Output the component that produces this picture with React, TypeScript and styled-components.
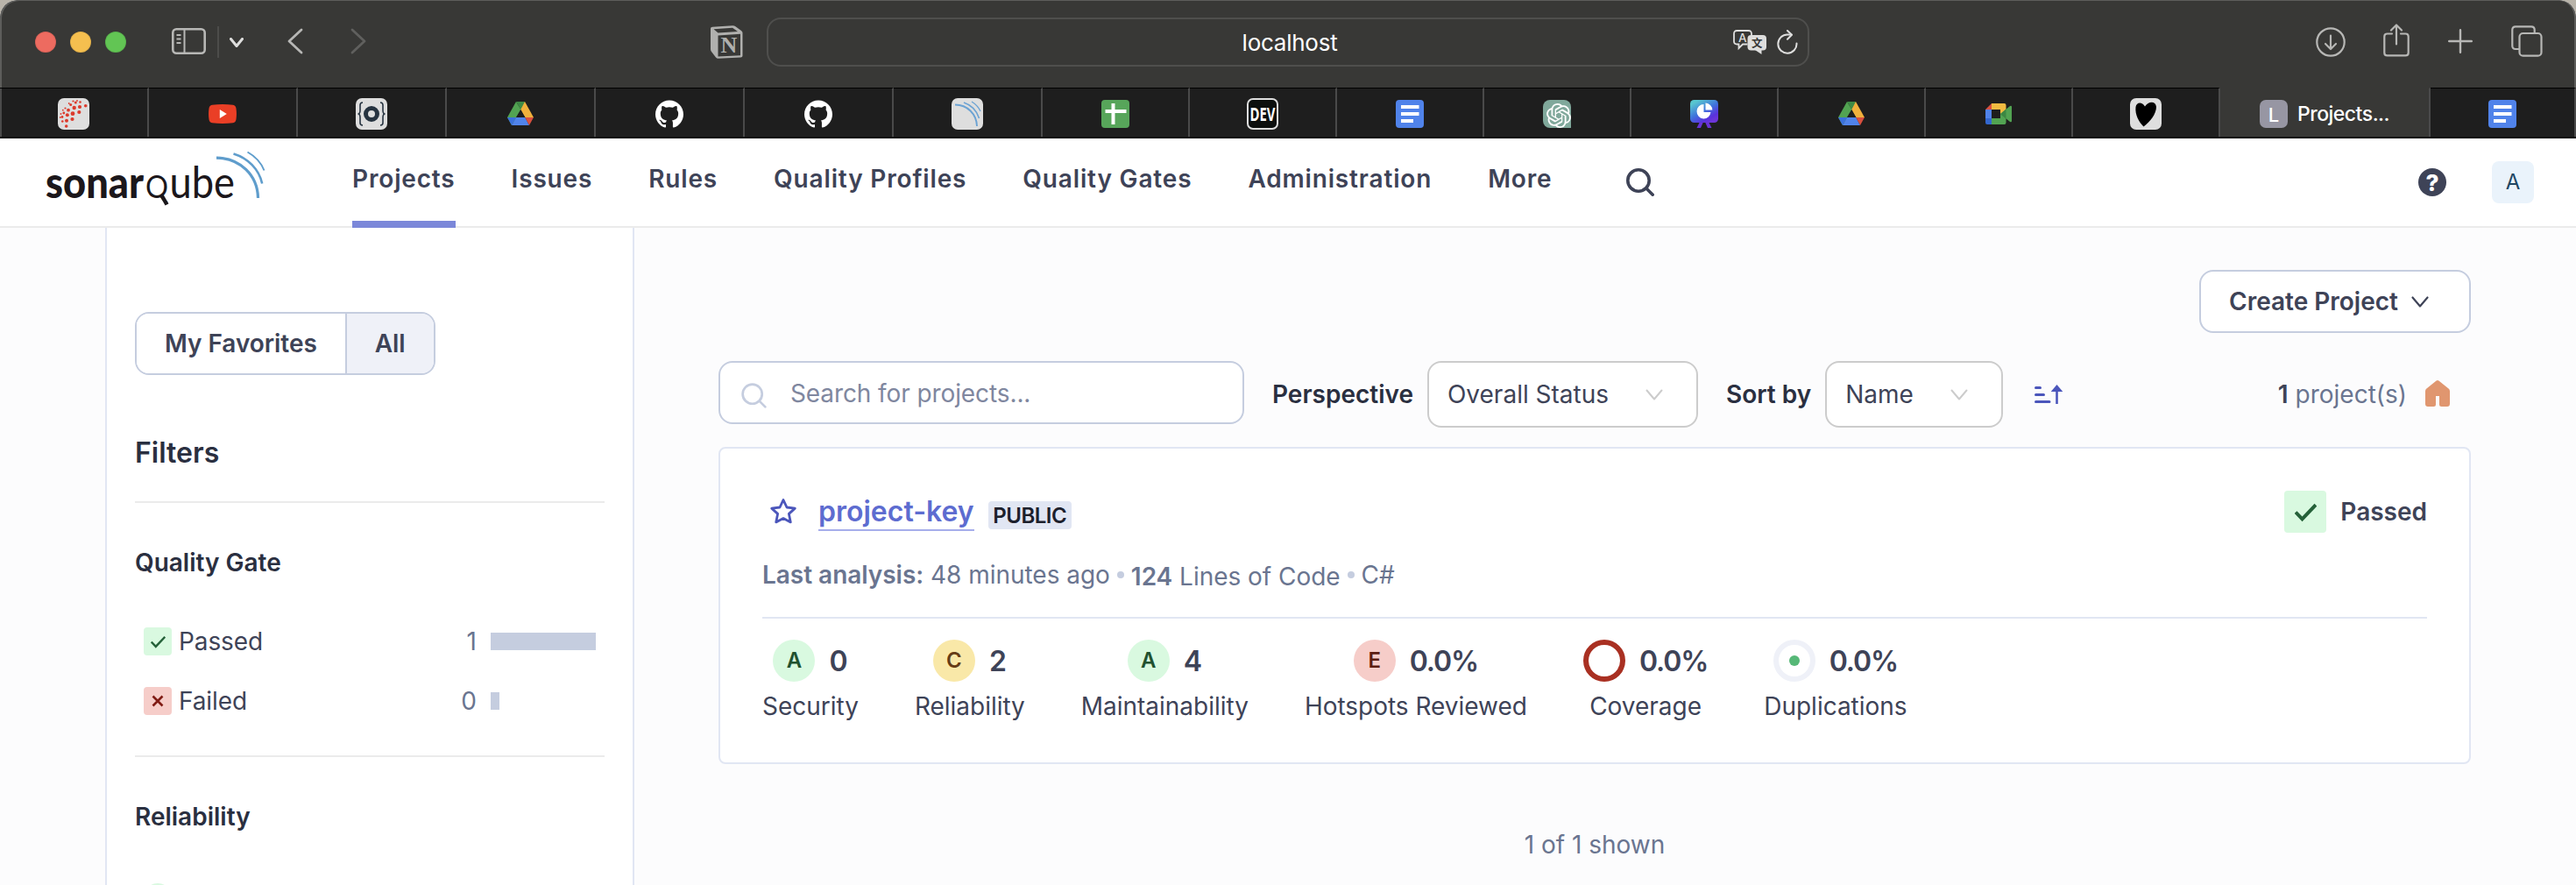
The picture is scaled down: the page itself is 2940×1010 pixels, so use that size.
import React from 'react';
import styled, { createGlobalStyle } from 'styled-components';
import { SiGithub, SiOpenai } from 'react-icons/si';

const color = {
  ink: '#3e4357',
  title: '#2a2f40',
  muted: '#6a7590',
  line: '#e1e6f3',
  field: '#c5cddf',
  rule: '#ebebeb',
};

const GlobalStyle = createGlobalStyle`
  * { box-sizing: border-box; }
  body {
    margin: 0;
    background: #b9b4aa;
    font-family: Inter, "Liberation Sans", sans-serif;
    font-size: 28px;
    line-height: 40px;
    font-optical-sizing: none;
    font-variation-settings: "opsz" 14;
    color: ${color.ink};
    -webkit-font-smoothing: antialiased;
  }
  svg { display: block; flex: none; }
`;

const Window = styled.div`
  width: 2940px;
  height: 1010px;
  overflow: hidden;
  border-radius: 20px 20px 0 0;
  background: #fcfcfd;
  display: flex;
  flex-direction: column;
`;

/* ---------- browser chrome ---------- */

const Toolbar = styled.div`
  height: 100px;
  flex: none;
  background: #383836;
  border-radius: 20px 20px 0 0;
  box-shadow: inset 2px 1px 0 #5d5d5b, inset -2px 0 0 #5d5d5b;
  display: flex;
  align-items: center;
  padding: 0 38px 4px 40px;
  color: #b7b7b5;
`;
const Lights = styled.div`
  display: flex;
  gap: 16px;
  margin-right: 52px;
`;
const Light = styled.span<{ $c: string }>`
  width: 24px;
  height: 24px;
  border-radius: 50%;
  background: ${(p) => p.$c};
  box-shadow: inset 0 0 0 1px rgba(0, 0, 0, 0.08);
`;
const Slot = styled.span<{ $w: number; $after?: number; $up?: number }>`
  width: ${(p) => p.$w}px;
  margin-right: ${(p) => p.$after ?? 0}px;
  padding-bottom: ${(p) => p.$up ?? 0}px;
  display: flex;
  flex: none;
`;
const ToolDivider = styled.span`
  width: 2px;
  height: 36px;
  background: #4c4c4a;
  margin-right: 12px;
`;
const UrlBar = styled.div`
  width: 1190px;
  height: 56px;
  border: 2px solid #4f4f4d;
  border-radius: 16px;
  display: flex;
  align-items: center;
  padding-right: 11px;
  color: #dededd;
`;
const UrlText = styled.span`
  flex: 1;
  text-align: center;
  padding-left: 89px;
  padding-top: 2px;
  color: #fff;
  font-size: 26px;
  letter-spacing: -0.25px;
`;
const Spacer = styled.span`
  flex: 1;
`;

const TabStrip = styled.div`
  height: 58px;
  flex: none;
  display: flex;
  background: #1e1e1e;
  border-bottom: 2px solid #050505;
  box-shadow: inset 2px 0 0 #4a4a4a;
`;
const Tab = styled.div<{ $w: number; $active?: boolean }>`
  width: ${(p) => p.$w}px;
  border-right: 2px solid #4a4a4a;
  border-top: 1px solid ${(p) => (p.$active ? '#383836' : '#000')};
  background: ${(p) => (p.$active ? '#383836' : 'transparent')};
  display: flex;
  align-items: center;
  justify-content: center;
  gap: 11px;
  padding-top: 2px;
  color: #fff;
`;
const Plate = styled.span`
  width: 36px;
  height: 36px;
  border-radius: 7px;
  background: #dedede;
  overflow: hidden;
  display: flex;
  align-items: center;
  justify-content: center;
`;
const DevPlate = styled(Plate)`
  background: #0c0f0e;
  border: 2px solid #dedede;
  overflow: visible;
`;
const LetterPlate = styled.span`
  width: 32px;
  height: 32px;
  border-radius: 7px;
  background: #9796a3;
  font-size: 22px;
  line-height: 34px;
  font-weight: 500;
  text-align: center;
`;
const TabTitle = styled.span`
  font-size: 23px;
  font-weight: 500;
  letter-spacing: -0.5px;
`;

/* ---------- application header ---------- */

const Header = styled.header`
  height: 102px;
  flex: none;
  background: #fff;
  border-bottom: 2px solid ${color.rule};
  display: flex;
  align-items: flex-start;
  padding: 0 48px 0 52px;
`;
const LogoBox = styled.div`
  width: 350px;
  padding-top: 14px;
`;
const Nav = styled.nav`
  display: flex;
  gap: 64px;
`;
const NavItem = styled.a<{ $active?: boolean }>`
  height: 102px;
  padding-top: 26px;
  font-weight: 600;
  letter-spacing: 0.84px;
  border-bottom: 8px solid ${(p) => (p.$active ? '#7b87d9' : 'transparent')};
`;
const HeaderIcon = styled.span`
  margin-left: 85px;
  padding-top: 34px;
`;
const Help = styled.span`
  width: 32px;
  height: 32px;
  margin: 34px 52px 0 0;
  border-radius: 50%;
  background: ${color.ink};
  color: #fff;
  font-size: 26px;
  font-weight: 800;
  line-height: 33px;
  text-align: center;
`;
const Avatar = styled.span`
  width: 48px;
  height: 48px;
  margin-top: 26px;
  border-radius: 8px;
  background: #eaf3fb;
  color: #1f4663;
  font-size: 24px;
  line-height: 48px;
  text-align: center;
`;

/* ---------- sidebar ---------- */

const Body = styled.div`
  flex: 1;
  min-height: 0;
  display: flex;
  padding-left: 120px;
`;
const Sidebar = styled.aside`
  width: 604px;
  background: #fff;
  border: 2px solid ${color.line};
  border-width: 0 2px;
  padding: 96px 32px 0;
  overflow: hidden;
`;
const Toggle = styled.div`
  display: inline-flex;
  height: 72px;
  border: 2px solid ${color.field};
  border-radius: 16px;
  overflow: hidden;
  vertical-align: top;
`;
const ToggleOption = styled.button<{ $on?: boolean }>`
  border: 0;
  border-left: ${(p) => (p.$on ? `2px solid ${color.field}` : '0')};
  padding: 0 32px;
  font: inherit;
  font-weight: 600;
  letter-spacing: -0.05px;
  color: ${color.ink};
  background: ${(p) => (p.$on ? '#eff1f8' : '#fff')};
`;
const FiltersTitle = styled.h2`
  margin: 65px 0 0;
  height: 81px;
  font-size: 32px;
  line-height: 48px;
  font-weight: 600;
  color: ${color.title};
  border-bottom: 2px solid ${color.rule};
`;
const Facet = styled.section`
  height: 290px;
  padding-top: 48px;
  border-bottom: 2px solid ${color.rule};
`;
const FacetTitle = styled.h3`
  margin: 0 0 36px;
  font-size: 28px;
  line-height: 40px;
  font-weight: 600;
  color: ${color.title};
`;
const FacetRow = styled.div<{ $lead?: number }>`
  height: 68px;
  padding: ${(p) => p.$lead ?? 0}px 10px 0;
  display: flex;
  align-items: center;
`;
const FacetLabel = styled.span`
  flex: 1;
  padding-left: 8px;
  letter-spacing: -0.1px;
`;
const FacetCount = styled.span`
  color: ${color.muted};
  margin-right: 16px;
`;
const BarTrack = styled.span`
  width: 120px;
`;
const Bar = styled.span`
  display: block;
  height: 20px;
  background: ${color.field};
`;
const StatusBox = styled.span<{ $size: number; $bad?: boolean }>`
  width: ${(p) => p.$size}px;
  height: ${(p) => p.$size}px;
  border-radius: 4px;
  background: ${(p) => (p.$bad ? '#f6cdc9' : '#d9f9e0')};
  color: ${(p) => (p.$bad ? '#801b14' : '#256139')};
  display: flex;
  align-items: center;
  justify-content: center;
`;

/* ---------- main ---------- */

const Main = styled.main`
  width: 2096px;
  padding: 48px 0 0 96px;
  display: flex;
  flex-direction: column;
`;
const CreateButton = styled.button`
  align-self: flex-end;
  width: 310px;
  height: 72px;
  flex: none;
  border: 2px solid ${color.field};
  border-radius: 16px;
  background: #fff;
  padding: 0 0 0 32px;
  font: inherit;
  font-weight: 600;
  color: ${color.ink};
  display: flex;
  align-items: center;
  gap: 15px;
`;
const Controls = styled.div`
  margin-top: 32px;
  height: 98px;
  display: flex;
  align-items: flex-start;
`;
const SearchField = styled.div`
  width: 600px;
  height: 72px;
  border: 2px solid ${color.field};
  border-radius: 16px;
  background: #fff;
  display: flex;
  align-items: center;
  padding: 0 24px;
  gap: 27px;
  color: #7f879f;
  letter-spacing: -0.1px;
`;
const SearchGlyph = styled.span`
  padding-top: 6px;
`;
const SearchText = styled.span`
  padding-top: 2px;
`;
const FieldLabel = styled.span`
  margin: 18px 16px 0 32px;
  font-weight: 600;
  color: ${color.title};
`;
const Select = styled.div<{ $w: number }>`
  width: ${(p) => p.$w}px;
  height: 76px;
  border: 2px solid #ccc;
  border-radius: 16px;
  background: #fff;
  display: flex;
  align-items: center;
  justify-content: space-between;
  padding: 0 38px 0 21px;
`;
const SortIcon = styled.span`
  margin: 27px 0 0 36px;
`;
const Total = styled.span`
  margin: 18px 21px 0 auto;
  color: ${color.muted};
`;
const Strong = styled.b`
  font-weight: 600;
  color: ${color.ink};
`;
const Home = styled.span`
  margin: 22px 24px 0 0;
`;
const Card = styled.article`
  height: 362px;
  border: 2px solid ${color.line};
  border-radius: 8px;
  background: #fff;
  padding: 48px;
  flex: none;
`;
const CardHead = styled.div`
  height: 48px;
  display: flex;
  align-items: center;
`;
const StarBox = styled.span`
  padding: 0 24px 2px 8px;
`;
const ProjectLink = styled.a`
  height: 44px;
  font-size: 32px;
  line-height: 44px;
  font-weight: 600;
  color: #5d6cd0;
  border-bottom: 2px solid #a6adeb;
`;
const Badge = styled.span`
  margin: 8px 0 0 16px;
  width: 95px;
  height: 32px;
  border-radius: 4px;
  background: ${color.line};
  color: #1c202c;
  font-size: 24px;
  line-height: 33px;
  font-weight: 600;
  letter-spacing: -0.5px;
  text-align: center;
`;
const GateStatus = styled.div`
  margin-left: auto;
  display: flex;
  align-items: center;
  gap: 16px;
  font-weight: 600;
`;
const Meta = styled.div`
  margin-top: 28px;
  height: 70px;
  border-bottom: 2px solid ${color.line};
  color: ${color.muted};
  display: flex;
  letter-spacing: -0.03px;
`;
const MetaItem = styled.span<{ $low?: boolean }>`
  padding-top: ${(p) => (p.$low ? 2 : 0)}px;
  white-space: pre;
`;
const MetaStrong = styled.b`
  font-weight: 600;
`;
const Dot = styled.i`
  width: 8px;
  height: 8px;
  border-radius: 50%;
  background: ${color.field};
  margin: 16px 8px 0;
`;
const Metrics = styled.div`
  display: flex;
  gap: 64px;
  padding-top: 24px;
  letter-spacing: -0.02px;
`;
const Metric = styled.div`
  display: flex;
  flex-direction: column;
  align-items: center;
`;
const MetricTop = styled.div`
  display: flex;
  align-items: center;
  gap: 16px;
  height: 48px;
  margin-bottom: 8px;
  font-size: 32px;
  font-weight: 600;
`;
const MetricValue = styled.span<{ $tight: boolean }>`
  padding-top: 1px;
  letter-spacing: ${(p) => (p.$tight ? -1.1 : 0)}px;
`;
const Rating = styled.span<{ $bg: string; $fg: string; $size?: number }>`
  width: ${(p) => p.$size ?? 48}px;
  height: ${(p) => p.$size ?? 48}px;
  border-radius: 50%;
  background: ${(p) => p.$bg};
  color: ${(p) => p.$fg};
  font-size: 24px;
  line-height: 47px;
  letter-spacing: 0;
  text-align: center;
`;
const Ring = styled.span<{ $c: string }>`
  width: 48px;
  height: 48px;
  border-radius: 50%;
  border: 6px solid ${(p) => p.$c};
  display: flex;
  align-items: center;
  justify-content: center;
`;
const RingDot = styled.i`
  width: 12px;
  height: 12px;
  border-radius: 50%;
  background: #56b877;
`;
const Shown = styled.p`
  margin: 72px 0 0;
  text-align: center;
  color: ${color.muted};
`;

/* ---------- drawings ---------- */

const Chevron = ({ w, h, c, sw }: { w: number; h: number; c: string; sw: number }) => (
  <svg width={w} height={h} viewBox={`0 0 ${w} ${h}`} fill="none" stroke={c} strokeWidth={sw} strokeLinecap="round" strokeLinejoin="round">
    <path d={`M1.5 1.5L${w / 2} ${h - 1.5}L${w - 1.5} 1.5`} />
  </svg>
);

const Magnifier = ({ size, c, sw }: { size: number; c: string; sw: number }) => (
  <svg width={size} height={size} viewBox="0 0 32 32" fill="none" stroke={c} strokeWidth={sw} strokeLinecap="round">
    <circle cx="14" cy="14" r="12.2" />
    <path d="M23 23l7.2 7.2" />
  </svg>
);

const Check = ({ size, sw }: { size: number; sw: number }) => (
  <svg width={size} height={size} viewBox="0 0 24 24" fill="none" stroke="currentColor" strokeWidth={sw}>
    <path d="M1 12l7.2 7.6L23 4" />
  </svg>
);

const Cross = () => (
  <svg width="14" height="14" viewBox="0 0 14 14" stroke="currentColor" strokeWidth="2.6">
    <path d="M1.5 1.5l11 11M12.5 1.5l-11 11" />
  </svg>
);

const Logo = () => (
  <svg width="252" height="76" viewBox="0 0 252 76">
    <g fill="#1b171b" fontFamily="Lato, 'Open Sans', sans-serif">
      <text x="0" y="54" fontSize="49" fontWeight="900" textLength="112" lengthAdjust="spacingAndGlyphs">sonar</text>
      <text x="114" y="54" fontSize="36" fontWeight="400" textLength="26" lengthAdjust="spacingAndGlyphs">Q</text>
      <text x="141.5" y="54" fontSize="50" fontWeight="400" textLength="74.5" lengthAdjust="spacingAndGlyphs">ube</text>
    </g>
    <path d="M132.500 51l6 10.500" stroke="#1b171b" strokeWidth="4.500" />
    <g fill="none" stroke="#5f9dcc">
      <path d="M195 8.200C222 8.500 242 28 242.500 54" strokeWidth="3.200" />
      <path d="M214.500 3.500C231 8.500 243.500 21 247.200 37.500" strokeWidth="2.600" />
      <path d="M230.500 1.500C238.500 6 246 13.500 249.500 22.500" strokeWidth="2" />
    </g>
  </svg>
);

const DriveIcon = () => (
  <svg width="30" height="27" viewBox="0 0 30 27">
    <path d="M10 0L0 18l5 9L15.500 9z" fill="#52a352" />
    <path d="M20 0h-5v9l5.300 9H30z" fill="#f0b03c" />
    <path d="M10 0h10l-4.700 9z" fill="#3f8a45" />
    <path d="M0 18h10l-5 9z" fill="#3a70dc" />
    <path d="M10 18h10.300L25 27H5z" fill="#5083ea" />
    <path d="M20.300 18H30l-5 9z" fill="#d9503f" />
    <path d="M15.300 9l5 9H10z" fill="#1e1e1e" />
  </svg>
);

const MeetIcon = () => (
  <svg width="30" height="24" viewBox="0 0 30 24">
    <path d="M0 7L7 0v7z" fill="#d9503f" />
    <path d="M0 7h7v10H0z" fill="#5083ea" />
    <path d="M0 17h7v7H2a2 2 0 0 1-2-2z" fill="#3367cf" />
    <path d="M7 0h14.500a2 2 0 0 1 2 2v6L17 13V7H7z" fill="#f2bb41" />
    <path d="M7 17h10v-5l6.500 5v5a2 2 0 0 1-2 2H7z" fill="#52a352" />
    <path d="M17 12L28 3q2-1 2 1v16q0 2-2 1z" fill="#52a352" />
    <path d="M17 12l6.500-5.500v11z" fill="#3c8743" />
  </svg>
);

const DocsIcon = () => (
  <svg width="32" height="32" viewBox="0 0 32 32">
    <rect width="32" height="32" rx="4" fill="#5083ea" />
    <path d="M6 6h20.500v4H6zM6 14h20.500v4H6zM6 22h14v4H6z" fill="#fff" />
  </svg>
);

const SheetsIcon = () => (
  <svg width="32" height="32" viewBox="0 0 32 32">
    <rect width="32" height="32" rx="4" fill="#57a55a" />
    <path d="M4.500 11h24v4h-24zM11.500 4h4v24h-4z" fill="#fff" />
  </svg>
);

const YoutubeIcon = () => (
  <svg width="32" height="22" viewBox="0 0 32 22">
    <path d="M4 .8Q16-.8 28 .8q3 .4 3.500 4 .9 6.200 0 12.400-.5 3.600-3.500 4-12 1.600-24 0-3-.4-3.500-4-.9-6.200 0-12.400Q1 1.200 4 .8z" fill="#ea3f26" />
    <path d="M12.800 6v10l8-5z" fill="#fff" />
  </svg>
);

const dots = [
  [31.7, 8.7, 1.8], [25, 10, 2.1], [24.3, 16, 2.1], [17, 17.7, 2.4], [16.5, 24, 2.1], [10, 25.7, 2],
  [9.7, 32, 1.8], [18.7, 11, 2.2], [10.8, 19.3, 2], [12, 13.7, 1.9], [5.3, 26.5, 1.3], [5, 21.5, 1.4],
  [25.5, 4.5, 1.3], [20.3, 5, 1.5], [14.7, 7.5, 1.5], [6.8, 17, 1.4], [8.5, 11.5, 1.1], [2.8, 22, 0.9],
  [3.5, 18, 0.9], [17.5, 3.5, 1.1], [12.7, 6, 0.9], [22, 3, 0.9], [5.8, 13.7, 0.9],
];

const DotsIcon = () => (
  <svg width="36" height="36" viewBox="0 0 36 36" fill="#dc3a2c">
    {dots.map(([x, y, r], i) => (
      <circle key={i} cx={x} cy={y} r={r} />
    ))}
  </svg>
);

const BracesIcon = () => (
  <svg width="36" height="36" viewBox="0 0 36 36" fill="none" stroke="#263340">
    <circle cx="18" cy="18" r="6.500" strokeWidth="5" />
    <path d="M8 5Q5 5 5 8v6q0 4-2.500 4Q5 18 5 22v6q0 3 3 3M28 5q3 0 3 3v6q0 4 2.500 4Q31 18 31 22v6q0 3-3 3" strokeWidth="1.600" />
  </svg>
);

const WavesIcon = () => (
  <svg width="36" height="36" viewBox="0 0 36 36" fill="none" stroke="#6ba2d3">
    <path d="M4 7.500C18 7.500 28.500 18 29 32" strokeWidth="1.900" />
    <path d="M14 5c9 3 15 10 17.500 18" strokeWidth="1.600" />
    <path d="M23 4c4 2.500 8 6.500 10 11" strokeWidth="1.300" />
  </svg>
);

const DevIcon = () => (
  <svg width="32" height="32" viewBox="0 0 32 32" overflow="visible">
    <text x="1.500" y="23.500" fontFamily="'Open Sans', sans-serif" fontWeight="700" fontSize="21" fill="#fff" textLength="29" lengthAdjust="spacingAndGlyphs">DEV</text>
  </svg>
);

const BoardIcon = () => (
  <svg width="32" height="32" viewBox="0 0 32 32">
    <defs>
      <linearGradient id="board" x1="0" y1="0" x2="0.700" y2="1">
        <stop offset="0.150" stopColor="#58c6cf" />
        <stop offset="0.550" stopColor="#3f74dc" />
        <stop offset="0.850" stopColor="#5a32dc" />
        <stop offset="1" stopColor="#6d35d8" />
      </linearGradient>
    </defs>
    <path d="M7.500 32l4-8h4l-3.500 8zM24.500 32l-4-8h-4l3.500 8z" fill="#6a33d6" />
    <rect width="32" height="26" rx="4.500" fill="url(#board)" />
    <path d="M15.500 5A8 8.200 0 1 0 23.500 14h-8z" fill="#fff" />
    <path d="M17.500 3.500a8 8 0 0 1 7.800 8h-7.800z" fill="#fff" />
  </svg>
);

const OpenAiTile = () => (
  <svg width="32" height="32" viewBox="0 0 32 32">
    <path d="M8 0h16a8 8 0 0 1 8 8v24H8a8 8 0 0 1-8-8V8a8 8 0 0 1 8-8z" fill="#80a89b" />
    <SiOpenai x="4" y="4" width="24" height="24" color="#fff" />
  </svg>
);

const HeartIcon = () => (
  <svg width="26" height="30" viewBox="0 0 26 30">
    <path d="M12 6.500C9 1 2.500 1 1.500 7 .5 16 5 24 10.500 29.500 18 24 25 15 25 7 24.500 0 16 0 12 6.500z" fill="#000" />
  </svg>
);

const SidebarIcon = () => (
  <svg width="39" height="30" viewBox="0 0 39 30" fill="none" stroke="currentColor">
    <rect x="1.300" y="1.300" width="36.400" height="27.400" rx="4" strokeWidth="2.600" />
    <path d="M14.500 1v28" strokeWidth="2" />
    <path d="M5.500 8h5M5.500 12.500h5M5.500 17h5" strokeWidth="1.800" />
  </svg>
);

const NotionIcon = () => (
  <svg width="38" height="38" viewBox="0 0 38 38">
    <path d="M1 3.500Q1 2 3 1.800L26 .3q2-.1 3.500 1L36 6q1.500 1 1.500 2.500v26q0 1.800-2 2L10 37.800q-2 .1-3-1.200L2 30Q1 28.800 1 27z" fill="#b0b0ae" />
    <path d="M4.500 4.200L26 2.800l6 4.200-22.500 1.500z" fill="#383836" />
    <path d="M9.500 11.500l25.500-1.700v24.500L9.500 35.500z" fill="#383836" />
    <text x="22" y="31" textAnchor="middle" fontFamily="'Liberation Serif', serif" fontWeight="700" fontSize="26" fill="#b0b0ae">N</text>
  </svg>
);

const TranslateIcon = () => (
  <svg width="38" height="28" viewBox="0 0 38 28">
    <path d="M21 6.500v-2Q21 1 17.500 1h-13Q1 1 1 4.500v8.500q0 3.500 3.500 3.500H6.500V21l4.500-4.500h5.500" fill="none" stroke="#dededd" strokeWidth="1.800" />
    <rect x="16.500" y="6" width="21.500" height="17.500" rx="4" fill="#dededd" />
    <path d="M25 23l7.500 5v-6z" fill="#dededd" />
    <text x="10.800" y="13.800" textAnchor="middle" fontFamily="Inter, sans-serif" fontSize="13.500" fontWeight="500" fill="#dededd">A</text>
    <text x="27.200" y="19.500" textAnchor="middle" fontFamily="'Noto Sans CJK SC', sans-serif" fontSize="12.500" fontWeight="700" fill="#383836">文</text>
  </svg>
);

const ReloadIcon = () => (
  <svg width="24" height="28" viewBox="0 0 24 28" fill="none" stroke="#dededd" strokeWidth="2" strokeLinecap="round" strokeLinejoin="round">
    <path d="M22.500 15.500A10.600 10.600 0 1 1 12 5.500h4.500" />
    <path d="M12 1l5 4.800-5 5" />
  </svg>
);

const DownloadIcon = () => (
  <svg width="34" height="34" viewBox="0 0 34 34" fill="none" stroke="currentColor" strokeWidth="2.200" strokeLinecap="round" strokeLinejoin="round">
    <circle cx="17" cy="17" r="15.700" />
    <path d="M17 9.500v15M11 19l6 6 6-6" />
  </svg>
);

const ShareIcon = () => (
  <svg width="30" height="38" viewBox="0 0 30 38" fill="none" stroke="currentColor" strokeWidth="2.200" strokeLinecap="round" strokeLinejoin="round">
    <path d="M10 11.500H4.500q-3.200 0-3.200 3.200v18.500q0 3.200 3.200 3.200h21q3.200 0 3.200-3.200V14.700q0-3.200-3.200-3.200H20" />
    <path d="M15 23.500V1.500M9 7.500l6-6 6 6" />
  </svg>
);

const PlusIcon = () => (
  <svg width="28" height="28" viewBox="0 0 28 28" stroke="currentColor" strokeWidth="2.400" strokeLinecap="round">
    <path d="M14 1.200v25.600M1.200 14h25.600" />
  </svg>
);

const TabsIcon = () => (
  <svg width="36" height="36" viewBox="0 0 36 36" fill="none" stroke="currentColor" strokeWidth="2.200">
    <path d="M9.500 27H5q-3.700 0-3.700-3.700V5Q1.300 1.300 5 1.300h18q3.700 0 3.700 3.700v4" />
    <rect x="9.500" y="9" width="25" height="25.700" rx="4" />
  </svg>
);

const BackIcon = ({ flip }: { flip?: boolean }) => (
  <svg width="18" height="30" viewBox="0 0 18 30" fill="none" stroke={flip ? '#60605e' : '#b7b7b5'} strokeWidth="2.800" strokeLinecap="round" strokeLinejoin="round">
    <path d={flip ? 'M2 2l14 13L2 28' : 'M16 2L2 15l14 13'} />
  </svg>
);

const StarIcon = () => (
  <svg width="32" height="30" viewBox="0 0 32 30" fill="none" stroke="#4b56bb" strokeWidth="2.800" strokeLinejoin="round">
    <path d="M16 2.500l4 8.500 9.300 1.100-6.900 6.300 1.900 9.500L16 23.600l-8.300 4.300 1.900-9.500-6.900-6.300L12 11z" />
  </svg>
);

const SortAscIcon = () => (
  <svg width="33" height="23" viewBox="0 0 33 23" fill="none" stroke="#4b56bb" strokeWidth="3" strokeLinecap="round">
    <path d="M1.500 3.500h5M1.500 11.500h9M1.500 19.500h15.500" />
    <path d="M25.500 4v18" strokeWidth="2.600" strokeLinecap="butt" />
    <path d="M25.500 0l6.800 8H18.700z" fill="#4b56bb" stroke="none" />
  </svg>
);

const HomeIcon = () => (
  <svg width="28" height="30" viewBox="0 0 28 30">
    <path d="M12.600.6q1.400-1.100 2.800 0L26.600 9.500Q28 10.600 28 12.400V27q0 3-3 3h-6.500q-2.500 0-2.500-2.500V18h-4v9.500Q12 30 9.500 30H3q-3 0-3-3V12.400q0-1.800 1.400-2.900z" fill="#e0966f" />
  </svg>
);

/* ---------- data ---------- */

const githubMark = <SiGithub size={32} color="#fff" />;

const tabs: { w: number; icon: React.ReactNode; title?: string }[] = [
  { w: 170, icon: <Plate><DotsIcon /></Plate> },
  { w: 170, icon: <YoutubeIcon /> },
  { w: 170, icon: <Plate><BracesIcon /></Plate> },
  { w: 170, icon: <DriveIcon /> },
  { w: 170, icon: githubMark },
  { w: 170, icon: githubMark },
  { w: 170, icon: <Plate><WavesIcon /></Plate> },
  { w: 168, icon: <SheetsIcon /> },
  { w: 168, icon: <DevPlate><DevIcon /></DevPlate> },
  { w: 168, icon: <DocsIcon /> },
  { w: 168, icon: <OpenAiTile /> },
  { w: 168, icon: <BoardIcon /> },
  { w: 168, icon: <DriveIcon /> },
  { w: 168, icon: <MeetIcon /> },
  { w: 168, icon: <Plate><HeartIcon /></Plate> },
  { w: 240, icon: <LetterPlate>L</LetterPlate>, title: 'Projects...' },
  { w: 166, icon: <DocsIcon /> },
];

const navItems = ['Projects', 'Issues', 'Rules', 'Quality Profiles', 'Quality Gates', 'Administration', 'More'];

const gates = [
  { label: 'Passed', count: 1, bad: false },
  { label: 'Failed', count: 0, bad: true },
];

const green = { bg: '#d9f9e0', fg: '#21512f' };
const metrics = [
  { label: 'Security', value: '0', mark: <Rating $bg={green.bg} $fg={green.fg}>A</Rating> },
  { label: 'Reliability', value: '2', mark: <Rating $bg="#f9e8a8" $fg="#653c16">C</Rating> },
  { label: 'Maintainability', value: '4', mark: <Rating $bg={green.bg} $fg={green.fg}>A</Rating> },
  { label: 'Hotspots Reviewed', value: '0.0%', mark: <Rating $bg="#f6cdc9" $fg="#5c1d12">E</Rating> },
  { label: 'Coverage', value: '0.0%', mark: <Ring $c="#a93022" /> },
  { label: 'Duplications', value: '0.0%', mark: <Ring $c="#eff1f8"><RingDot /></Ring> },
];

export default function App() {
  const most = Math.max(...gates.map((g) => g.count));
  return (
    <>
      <GlobalStyle />
      <Window>
        <Toolbar>
          <Lights>
            <Light $c="#ed6b60" />
            <Light $c="#f5bf4f" />
            <Light $c="#62c554" />
          </Lights>
          <Slot $w={38} $after={14} $up={2}><SidebarIcon /></Slot>
          <ToolDivider />
          <Slot $w={16} $after={50}><Chevron w={16} h={11} c="#dededd" sw={3} /></Slot>
          <Slot $w={18} $after={54} $up={2}><BackIcon /></Slot>
          <Slot $w={18} $after={392} $up={2}><BackIcon flip /></Slot>
          <Slot $w={38} $after={27}><NotionIcon /></Slot>
          <UrlBar>
            <UrlText>localhost</UrlText>
            <Slot $w={38} $after={12}><TranslateIcon /></Slot>
            <ReloadIcon />
          </UrlBar>
          <Spacer />
          <Slot $w={34} $after={43}><DownloadIcon /></Slot>
          <Slot $w={30} $after={44} $up={4}><ShareIcon /></Slot>
          <Slot $w={28} $after={44} $up={2}><PlusIcon /></Slot>
          <Slot $w={36} $up={2}><TabsIcon /></Slot>
        </Toolbar>
        <TabStrip>
          {tabs.map((t, i) => (
            <Tab key={i} $w={t.w} $active={!!t.title}>
              {t.icon}
              {t.title && <TabTitle>{t.title}</TabTitle>}
            </Tab>
          ))}
        </TabStrip>

        <Header>
          <LogoBox><Logo /></LogoBox>
          <Nav>
            {navItems.map((n, i) => (
              <NavItem key={n} $active={i === 0}>{n}</NavItem>
            ))}
          </Nav>
          <HeaderIcon><Magnifier size={32} c={color.ink} sw={3.6} /></HeaderIcon>
          <Spacer />
          <Help>?</Help>
          <Avatar>A</Avatar>
        </Header>

        <Body>
          <Sidebar>
            <Toggle>
              <ToggleOption>My Favorites</ToggleOption>
              <ToggleOption $on>All</ToggleOption>
            </Toggle>
            <FiltersTitle>Filters</FiltersTitle>
            <Facet>
              <FacetTitle>Quality Gate</FacetTitle>
              {gates.map((g) => (
                <FacetRow key={g.label}>
                  <StatusBox $size={32} $bad={g.bad}>
                    {g.bad ? <Cross /> : <Check size={17} sw={3.4} />}
                  </StatusBox>
                  <FacetLabel>{g.label}</FacetLabel>
                  <FacetCount>{g.count}</FacetCount>
                  <BarTrack>
                    <Bar style={{ width: Math.max(10, (g.count / most) * 120) }} />
                  </BarTrack>
                </FacetRow>
              ))}
            </Facet>
            <Facet>
              <FacetTitle>Reliability</FacetTitle>
              <FacetRow $lead={4}>
                <Rating $bg={green.bg} $fg={green.fg} $size={32} />
              </FacetRow>
            </Facet>
          </Sidebar>

          <Main>
            <CreateButton>
              Create Project
              <Chevron w={20} h={13} c={color.ink} sw={2.2} />
            </CreateButton>
            <Controls>
              <SearchField>
                <SearchGlyph><Magnifier size={29} c={color.field} sw={3} /></SearchGlyph>
                <SearchText>Search for projects...</SearchText>
              </SearchField>
              <FieldLabel>Perspective</FieldLabel>
              <Select $w={309}>
                Overall Status
                <Chevron w={20} h={13} c="#ccc" sw={2} />
              </Select>
              <FieldLabel>Sort by</FieldLabel>
              <Select $w={203}>
                Name
                <Chevron w={20} h={13} c="#ccc" sw={2} />
              </Select>
              <SortIcon><SortAscIcon /></SortIcon>
              <Total><Strong>1</Strong> project(s)</Total>
              <Home><HomeIcon /></Home>
            </Controls>

            <Card>
              <CardHead>
                <StarBox><StarIcon /></StarBox>
                <ProjectLink>project-key</ProjectLink>
                <Badge>PUBLIC</Badge>
                <GateStatus>
                  <StatusBox $size={48}><Check size={25} sw={3.8} /></StatusBox>
                  Passed
                </GateStatus>
              </CardHead>
              <Meta>
                <MetaItem><MetaStrong>Last analysis:</MetaStrong> 48 minutes ago</MetaItem>
                <Dot />
                <MetaItem $low><MetaStrong>124</MetaStrong> Lines of Code</MetaItem>
                <Dot />
                <MetaItem>C#</MetaItem>
              </Meta>
              <Metrics>
                {metrics.map((m) => (
                  <Metric key={m.label}>
                    <MetricTop>
                      {m.mark}
                      <MetricValue $tight={m.value.length > 1}>{m.value}</MetricValue>
                    </MetricTop>
                    {m.label}
                  </Metric>
                ))}
              </Metrics>
            </Card>
            <Shown>1 of 1 shown</Shown>
          </Main>
        </Body>
      </Window>
    </>
  );
}
